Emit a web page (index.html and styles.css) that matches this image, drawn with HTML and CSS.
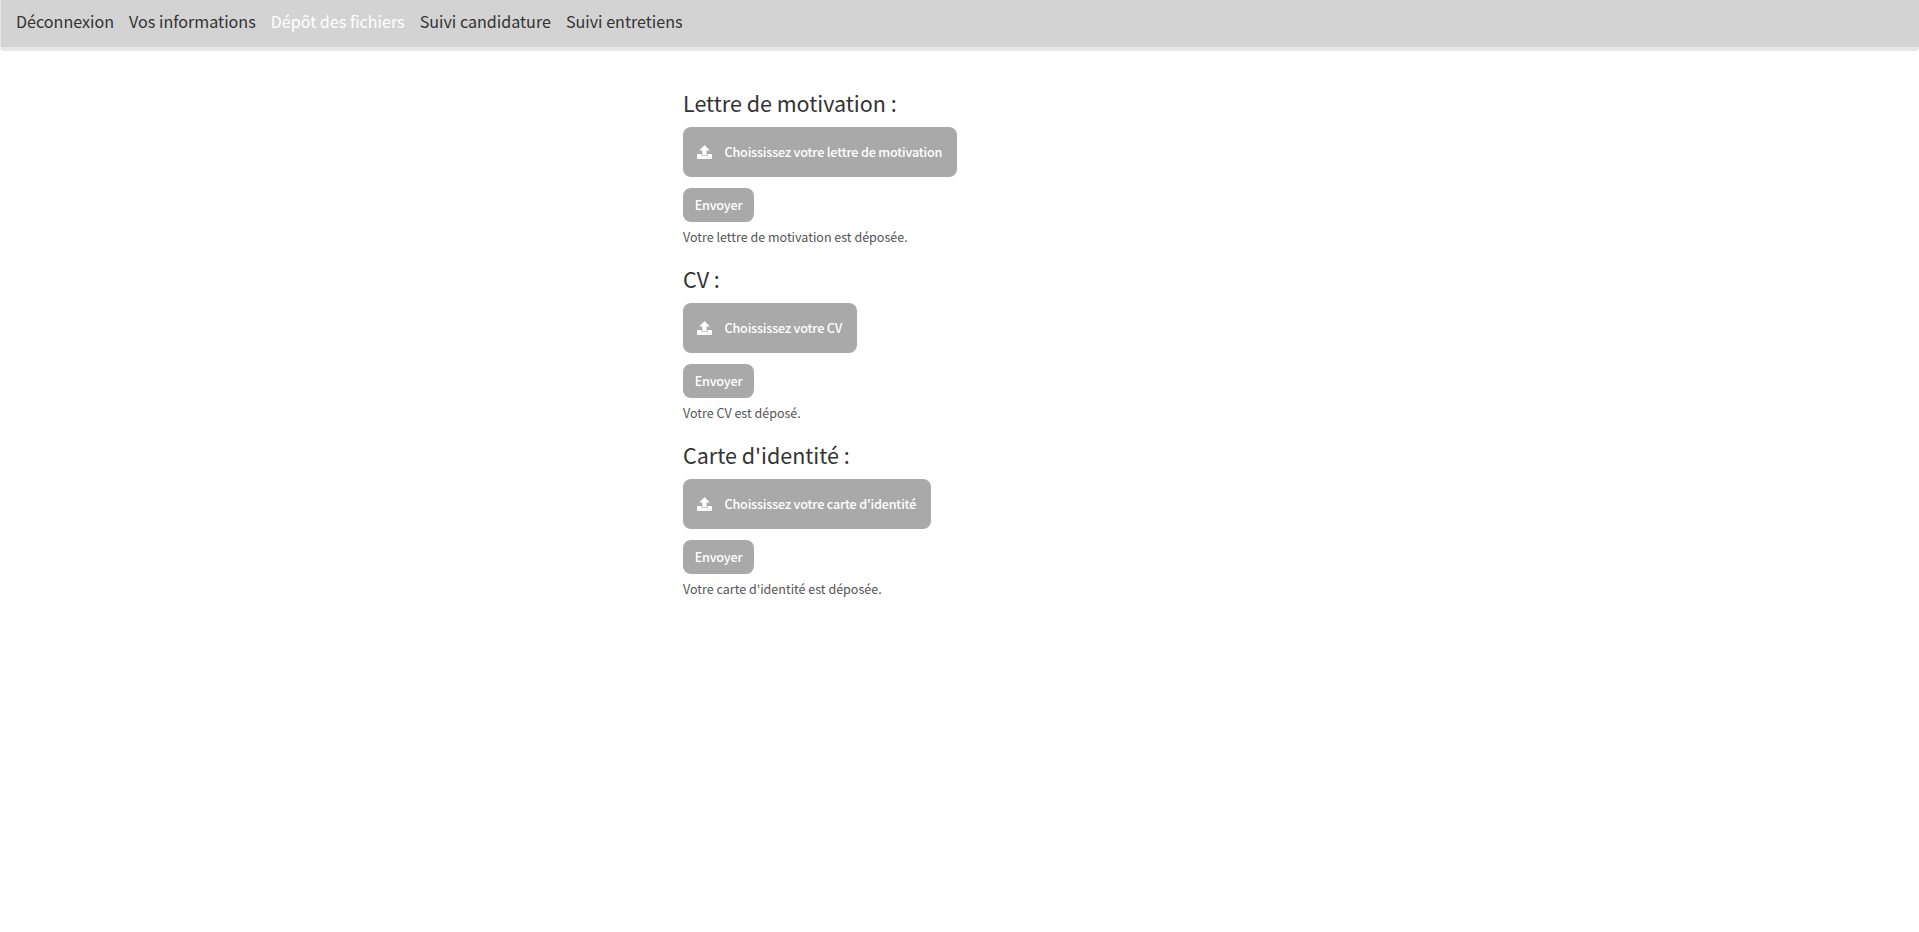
FILE: index.html
```html
<!DOCTYPE html>
<html lang="fr">
<head>
<meta charset="utf-8">
<title>Dépôt des fichiers</title>
<link rel="stylesheet" href="styles.css">
</head>
<body>
<svg class="defs" width="0" height="0" aria-hidden="true">
  <symbol id="upload" viewBox="0 0 15 14">
    <path fill="currentColor" d="M7.5 0 12.8 5.4H9.6V10.6H5.4V5.4H2.2Z"/>
    <path fill="currentColor" fill-rule="evenodd" d="M.8 9H4.6V11H10.4V9H14.2Q15 9 15 9.8V13.2Q15 14 14.2 14H.8Q0 14 0 13.2V9.8Q0 9 .8 9ZM10.2 12.2V13H11V12.2ZM12.4 12.2V13H13.2V12.2Z"/>
  </symbol>
</svg>
<nav class="navbar">
  <a class="nav-link">Déconnexion</a>
  <a class="nav-link">Vos informations</a>
  <a class="nav-link active">Dépôt des fichiers</a>
  <a class="nav-link">Suivi candidature</a>
  <a class="nav-link">Suivi entretiens</a>
</nav>
<main class="content">
  <form class="deposit">
    <h2 class="title">Lettre de motivation :</h2>
    <label class="picker"><svg class="icon"><use href="#upload"/></svg><span>Choississez votre lettre de motivation</span></label>
    <button class="send" type="button">Envoyer</button>
    <p class="status">Votre lettre de motivation est déposée.</p>
  </form>
  <form class="deposit">
    <h2 class="title">CV :</h2>
    <label class="picker"><svg class="icon"><use href="#upload"/></svg><span>Choississez votre CV</span></label>
    <button class="send" type="button">Envoyer</button>
    <p class="status">Votre CV est déposé.</p>
  </form>
  <form class="deposit">
    <h2 class="title">Carte d'identité :</h2>
    <label class="picker"><svg class="icon"><use href="#upload"/></svg><span>Choississez votre carte d'identité</span></label>
    <button class="send" type="button">Envoyer</button>
    <p class="status">Votre carte d'identité est déposée.</p>
  </form>
</main>
</body>
</html>
```

FILE: styles.css
```css
* { box-sizing: border-box; }
body {
  margin: 0;
  background: #fff;
  color: #333;
  font-family: "Noto Sans CJK SC", "Noto Sans", sans-serif;
}
.defs { display: block; height: 0; }
.navbar {
  display: flex;
  gap: 15px;
  height: 51px;
  padding: 6px 15px 0;
  background: #d3d3d3;
  border: solid #e7e7e7;
  border-width: 0 0 4px 1px;
  border-radius: 0 0 4px 4px;
}
.nav-link {
  font-size: 16.13px;
  line-height: 30px;
  color: #333;
  white-space: nowrap;
}
.nav-link.active { color: #fff; }
.content {
  padding: 36px 0 0 683px;
}
.deposit {
  display: flex;
  flex-direction: column;
  align-items: flex-start;
  height: 176px;
}
.title {
  margin: 0 0 8px;
  font-size: 21.5px;
  font-weight: 400;
  line-height: 32px;
}
.picker {
  display: flex;
  align-items: center;
  gap: 12.5px;
  height: 50px;
  padding: 0 15px 1px 14px;
  border-radius: 8px;
  background: #a9a9a9;
  color: #fff;
  font-size: 12.6px;
  font-weight: 500;
  letter-spacing: -0.18px;
}
.icon { width: 15px; height: 14px; }
.send {
  height: 34px;
  margin: 11px 0 0;
  padding: 0 11.7px 1px;
  border: 0;
  border-radius: 8px;
  background: #a9a9a9;
  color: #fff;
  font: 500 12.6px "Noto Sans CJK SC", "Noto Sans", sans-serif;
  letter-spacing: -0.18px;
}
.status {
  margin: 5px 0 0;
  font-size: 12.53px;
  line-height: 20px;
  color: #555;
}
```
